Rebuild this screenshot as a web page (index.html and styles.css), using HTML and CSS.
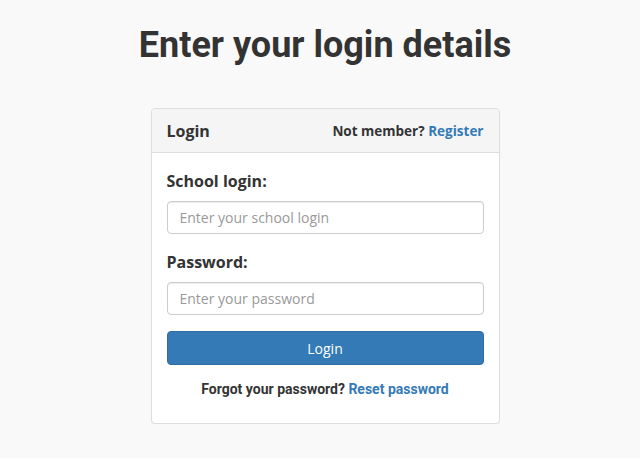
FILE: index.html
```html
<!DOCTYPE html>
<html lang="en">
<head>
    <meta charset="UTF-8">
    <meta name="viewport" content="width=device-width, initial-scale=1.0">
    <title>Login</title>
    <link rel="stylesheet" href="styles.css">
</head>
<body>
    <div class="page">
        <h1 class="title">Enter your login details</h1>

        <!-- login panel -->
        <div class="panel">
            <div class="panel-heading">
                <span class="panel-title">Login</span>
                <span class="member">Not member? <a href="#">Register</a></span>
            </div>
            <form class="panel-body">
                <div class="field">
                    <label for="school">School login:</label>
                    <input id="school" type="text" placeholder="Enter your school login">
                </div>
                <div class="field">
                    <label for="password">Password:</label>
                    <input id="password" type="password" placeholder="Enter your password">
                </div>
                <button type="button" class="btn">Login</button>
                <p class="forgot">Forgot your password? <a href="#">Reset password</a></p>
            </form>
        </div>
    </div>
</body>
</html>
```

FILE: styles.css
```css
html, body {
  margin: 0;
  padding: 0;
  background: #f9f9f9;
  color: #333;
  font-family: "Open Sans", "Liberation Sans", sans-serif;
}
a {
  color: #337ab7;
  text-decoration: none;
}
.page {
  display: flex;
  flex-direction: column;
  align-items: center;
  padding-left: 10px;
}
.title {
  margin: 23px 0 0;
  font-family: Roboto, "Liberation Sans", sans-serif;
  font-size: 36px;
  font-weight: 700;
  line-height: 44px;
  color: #333;
}
.panel {
  width: 347px;
  margin-top: 41px;
  background: #fff;
  border: 1px solid #ddd;
  border-radius: 4px;
  box-shadow: 0 1px 1px rgba(0, 0, 0, .05);
}
.panel-heading {
  display: flex;
  justify-content: space-between;
  align-items: center;
  height: 43px;
  padding: 0 15px;
  background: #f5f5f5;
  border-bottom: 1px solid #ddd;
  border-radius: 3px 3px 0 0;
}
.panel-title {
  font-size: 16px;
  font-weight: 700;
}
.member {
  font-size: 13.5px;
  font-weight: 700;
}
.panel-body {
  display: flex;
  flex-direction: column;
  padding: 16px 15px 24px;
  margin: 0;
}
.field {
  display: flex;
  flex-direction: column;
  margin-bottom: 16px;
}
.field label {
  font-size: 16px;
  font-weight: 700;
  line-height: 24px;
  margin-bottom: 8px;
}
.field input {
  height: 33px;
  box-sizing: border-box;
  padding: 6px 12px;
  font-family: "Open Sans", "Liberation Sans", sans-serif;
  font-size: 14px;
  color: #555;
  border: 1px solid #ccc;
  border-radius: 4px;
  box-shadow: inset 0 1px 1px rgba(0, 0, 0, .075);
}
.field input::placeholder {
  color: #999;
}
.btn {
  height: 34px;
  padding: 0;
  font-family: "Open Sans", "Liberation Sans", sans-serif;
  font-size: 14px;
  color: #fff;
  background: #337ab7;
  border: 1px solid #2e6da4;
  border-radius: 4px;
}
.forgot {
  margin: 14px 0 0;
  text-align: center;
  font-family: Roboto, "Liberation Sans", sans-serif;
  font-size: 14px;
  font-weight: 700;
  line-height: 20px;
}
```
